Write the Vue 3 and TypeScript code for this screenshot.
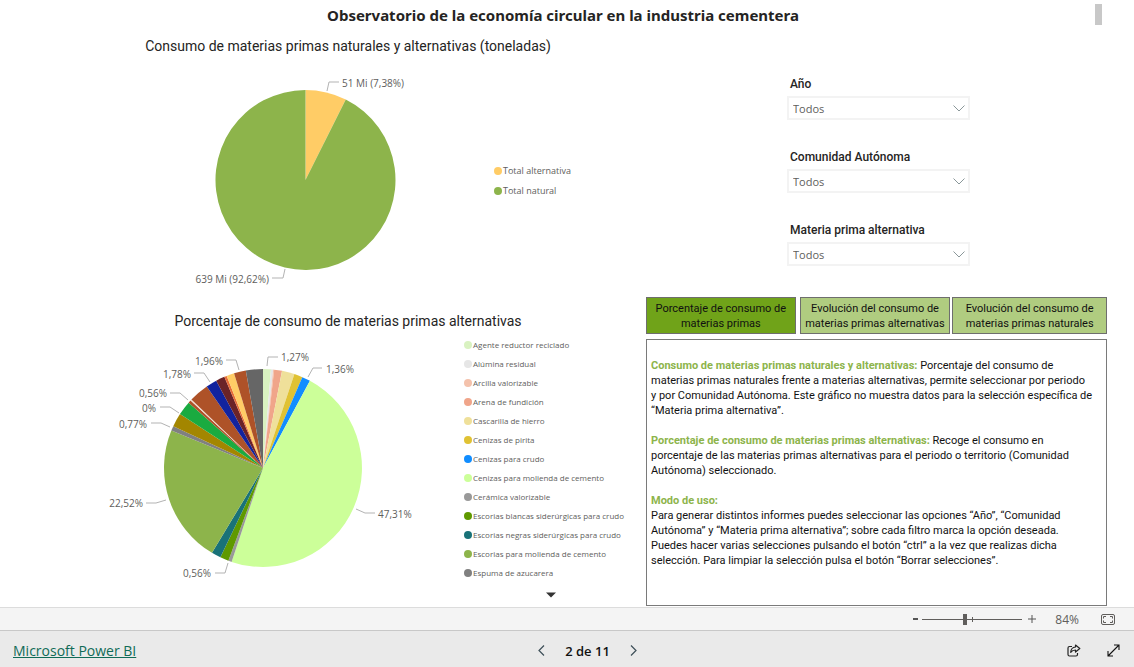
<script setup lang="ts">
import { ref } from 'vue'

interface Slice { name: string; end: number; color: string }
interface Callout { text: string; x: number; y: number; anchor: 'start' | 'end'; line: string }

const materials: Slice[] = [
  { name: 'Agente reductor reciclado', end: 4.6, color: '#d9f2c1' },
  { name: 'Alúmina residual', end: 5.9, color: '#e6e6e6' },
  { name: 'Arcilla valorizable', end: 6.5, color: '#f4c2ac' },
  { name: 'Arena de fundición', end: 11.1, color: '#f0a58a' },
  { name: 'Cascarilla de hierro', end: 18.5, color: '#efe09a' },
  { name: 'Cenizas de pirita', end: 23.4, color: '#e0c233' },
  { name: 'Cenizas para crudo', end: 28.3, color: '#118dff' },
  { name: 'Cenizas para molienda de cemento', end: 198.5, color: '#ccff99' },
  { name: 'Cerámica valorizable', end: 200.5, color: '#999999' },
  { name: 'Escorias blancas siderúrgicas para crudo', end: 205.5, color: '#5f9900' },
  { name: 'Escorias negras siderúrgicas para crudo', end: 211, color: '#197278' },
  { name: 'Escorias para molienda de cemento', end: 292.2, color: '#8db44b' },
  { name: 'Espuma de azucarera', end: 295, color: '#808080' },
]

const otherSlices: Slice[] = [
  { name: 'o1', end: 303, color: '#a38600' },
  { name: 'o2', end: 311.3, color: '#1aab40' },
  { name: 'o3', end: 313, color: '#ae5228' },
  { name: 'o4', end: 313.7, color: '#f3ddd2' },
  { name: 'o5', end: 325.4, color: '#ae5228' },
  { name: 'o6', end: 331.8, color: '#12239e' },
  { name: 'o7', end: 337, color: '#6b2328' },
  { name: 'o8', end: 338.5, color: '#e66c37' },
  { name: 'o9', end: 343, color: '#ffcc66' },
  { name: 'o10', end: 350, color: '#ae5228' },
  { name: 'o11', end: 360, color: '#666666' },
]

const totals: Slice[] = [
  { name: 'Total alternativa', end: 26.57, color: '#ffcc66' },
  { name: 'Total natural', end: 360, color: '#8db44b' },
]

function arcs(slices: Slice[], cx: number, cy: number, r: number) {
  const point = (deg: number) => {
    const a = (deg * Math.PI) / 180
    return `${(cx + r * Math.sin(a)).toFixed(2)} ${(cy - r * Math.cos(a)).toFixed(2)}`
  }
  return slices.map((s, i) => {
    const start = i ? slices[i - 1].end : 0
    const large = s.end - start > 180 ? 1 : 0
    return { color: s.color, d: `M${cx} ${cy}L${point(start)}A${r} ${r} 0 ${large} 1 ${point(s.end)}Z` }
  })
}

const totalArcs = arcs(totals, 165.5, 120, 90)
const materialArcs = arcs([...materials, ...otherSlices], 163, 133, 99)

const totalCallouts: Callout[] = [
  { text: '51 Mi (7,38%)', x: 202, y: 27, anchor: 'start', line: 'M187 31L189 22H199' },
  { text: '639 Mi (92,62%)', x: 129, y: 223, anchor: 'end', line: 'M145 209L143 218H132' },
]

const materialCallouts: Callout[] = [
  { text: '1,27%', x: 181, y: 26, anchor: 'start', line: 'M167 31L168 22H178' },
  { text: '1,36%', x: 226, y: 38, anchor: 'start', line: 'M208 42L213 33H222' },
  { text: '47,31%', x: 278, y: 183, anchor: 'start', line: 'M256 174L265 178H275' },
  { text: '0,56%', x: 111, y: 242, anchor: 'end', line: 'M128 228L125 238H115' },
  { text: '22,52%', x: 43, y: 172, anchor: 'end', line: 'M66 165L56 168H46' },
  { text: '0,77%', x: 47, y: 93, anchor: 'end', line: 'M70 92L61 88H51' },
  { text: '0%', x: 56, y: 77, anchor: 'end', line: 'M79 78L70 72H60' },
  { text: '0,56%', x: 67, y: 62, anchor: 'end', line: 'M88 65L80 58H70' },
  { text: '1,78%', x: 91, y: 43, anchor: 'end', line: 'M110 47L104 38H94' },
  { text: '1,96%', x: 123, y: 30, anchor: 'end', line: 'M139 35L136 25H126' },
]

const filters = [
  { id: 'year', label: 'Año' },
  { id: 'region', label: 'Comunidad Autónoma' },
  { id: 'material', label: 'Materia prima alternativa' },
]

const tabs = [
  ['Porcentaje de consumo de', 'materias primas'],
  ['Evolución del consumo de', 'materias primas alternativas'],
  ['Evolución del consumo de', 'materias primas naturales'],
]
const activeTab = ref(0)
const zoom = ref(84)
</script>

<template>
  <div class="app">
    <main class="report">
      <h1>Observatorio de la economía circular en la industria cementera</h1>
      <div class="columns">
        <div class="charts">
          <section class="chart totals">
            <h2>Consumo de materias primas naturales y alternativas (toneladas)</h2>
            <div class="chart-body">
              <svg class="pie" width="320" height="236" viewBox="0 0 320 236" role="img" aria-label="Consumo de materias primas">
                <path v-for="a in totalArcs" :key="a.d" :d="a.d" :fill="a.color" />
                <g v-for="c in totalCallouts" :key="c.line">
                  <path class="leader" :d="c.line" />
                  <text :x="c.x" :y="c.y" :text-anchor="c.anchor">{{ c.text }}</text>
                </g>
              </svg>
              <ul class="legend">
                <li v-for="s in totals" :key="s.name"><i :style="{ background: s.color }"></i>{{ s.name }}</li>
              </ul>
            </div>
          </section>
          <section class="chart materials">
            <h2>Porcentaje de consumo de materias primas alternativas</h2>
            <div class="chart-body">
              <svg class="pie" width="340" height="260" viewBox="0 0 340 260" role="img" aria-label="Porcentaje de materias primas alternativas">
                <path v-for="a in materialArcs" :key="a.d" :d="a.d" :fill="a.color" />
                <g v-for="c in materialCallouts" :key="c.line">
                  <path class="leader" :d="c.line" />
                  <text :x="c.x" :y="c.y" :text-anchor="c.anchor">{{ c.text }}</text>
                </g>
              </svg>
              <div class="legend-box">
                <ul class="legend">
                  <li v-for="s in materials" :key="s.name"><i :style="{ background: s.color }"></i>{{ s.name }}</li>
                </ul>
                <button class="more" type="button" aria-label="Más">
                  <svg width="10" height="6" viewBox="0 0 10 6"><path d="M0 .5H10L5 5.5Z" fill="#333" /></svg>
                </button>
              </div>
            </div>
          </section>
        </div>

        <div class="side">
          <form class="filters">
            <div v-for="f in filters" :key="f.id" class="filter">
              <label :for="f.id">{{ f.label }}</label>
              <div class="select">
                <select :id="f.id"><option>Todos</option></select>
                <svg width="12" height="7" viewBox="0 0 12 7"><path d="M.5 .5L6 6L11.500 .5" fill="none" stroke="#8a9799" /></svg>
              </div>
            </div>
          </form>
          <nav class="tabs">
            <button v-for="(t, i) in tabs" :key="i" type="button" :class="{ active: activeTab === i }" @click="activeTab = i">
              {{ t[0] }}<br />{{ t[1] }}
            </button>
          </nav>
          <article class="notes">
            <p><b>Consumo de materias primas naturales y alternativas:</b> Porcentaje del consumo de<br />materias primas naturales frente a materias alternativas, permite seleccionar por periodo<br />y por Comunidad Autónoma. Este gráfico no muestra datos para la selección específica de<br />“Materia prima alternativa”.</p>
            <p><b>Porcentaje de consumo de materias primas alternativas:</b> Recoge el consumo en<br />porcentaje de las materias primas alternativas para el periodo o territorio (Comunidad<br />Autónoma) seleccionado.</p>
            <p><b>Modo de uso:</b><br />Para generar distintos informes puedes seleccionar las opciones “Año”, “Comunidad<br />Autónoma” y “Materia prima alternativa”; sobre cada filtro marca la opción deseada.<br />Puedes hacer varias selecciones pulsando el botón “ctrl” a la vez que realizas dicha<br />selección. Para limpiar la selección pulsa el botón “Borrar selecciones”.</p>
          </article>
        </div>
      </div>
      <div class="scroll-thumb"></div>
    </main>

    <div class="zoom-bar">
      <button type="button" class="step" aria-label="Alejar">
        <svg width="5" height="10" viewBox="0 0 5 10"><path d="M0 5H5" stroke="#555" stroke-width="2" /></svg>
      </button>
      <div class="slider">
        <input v-model="zoom" type="range" min="0" max="200" aria-label="Zoom" />
        <span class="tick"></span>
      </div>
      <button type="button" class="step" aria-label="Acercar">
        <svg width="8" height="10" viewBox="0 0 8 10"><path d="M0 5H8M4 1V9" stroke="#555" /></svg>
      </button>
      <output>{{ zoom }}%</output>
      <button type="button" class="fit" aria-label="Ajustar a la página">
        <svg width="14" height="11" viewBox="0 0 14 11" fill="none" stroke="#5f5d5b">
          <rect x=".5" y=".5" width="13" height="10" rx="1.500" />
          <path d="M5 2.500H2.500V4.500M9 2.500H11.500V4.500M5 8.500H2.500V6.500M9 8.500H11.500V6.500" />
        </svg>
      </button>
    </div>

    <footer class="footer">
      <a href="#">Microsoft Power BI</a>
      <div class="pager">
        <button type="button" aria-label="Anterior">
          <svg width="7" height="11" viewBox="0 0 7 11"><path d="M6 .5L1 5.500L6 10.500" fill="none" stroke="#3d4f58" stroke-width="1.200" /></svg>
        </button>
        <span>2 de 11</span>
        <button type="button" aria-label="Siguiente">
          <svg width="7" height="11" viewBox="0 0 7 11"><path d="M1 .5L6 5.500L1 10.500" fill="none" stroke="#3d4f58" stroke-width="1.200" /></svg>
        </button>
      </div>
      <div class="actions">
        <button type="button" aria-label="Compartir">
          <svg width="14" height="13" viewBox="0 0 14 13" fill="none" stroke="#222" stroke-width="1.200">
            <path d="M5 2.500H2.500A1.500 1.500 0 0 0 1 4V10.500A1.500 1.500 0 0 0 2.500 12H9A1.500 1.500 0 0 0 10.500 10.500V9" />
            <path d="M8.500 1L12.800 4.500L8.500 8V6C6 6 5 6.500 3.700 8.300C3.900 5.200 5.500 3.200 8.500 3Z" stroke-linejoin="round" />
          </svg>
        </button>
        <button type="button" aria-label="Pantalla completa">
          <svg width="13" height="13" viewBox="0 0 13 13" fill="none" stroke="#111" stroke-width="1.100"><path d="M1 12L12 1M7 1H12V6M1 7V12H6" /></svg>
        </button>
      </div>
    </footer>
  </div>
</template>

<style>
body { margin: 0; }
</style>

<style scoped>
.app {
  display: flex;
  flex-direction: column;
  min-height: 100vh;
  background: #fff;
  color: #252423;
  font-family: "Open Sans", "Noto Sans", sans-serif;
}
button { padding: 0; border: 0; background: none; font: inherit; color: inherit; cursor: pointer; }
button svg { display: block; }
h1, h2, p, ul { margin: 0; padding: 0; font-weight: 400; }
.report { position: relative; flex: 1; display: flex; flex-direction: column; }
h1 {
  padding: 5px 8px 0 0;
  text-align: center;
  font: 700 15px/20px "Noto Sans", sans-serif;
}
.columns { flex: 1; display: grid; grid-template-columns: minmax(0, 646fr) minmax(0, 488fr); }
.chart h2 { margin-left: 50px; text-align: center; font: 14px/20px Roboto, sans-serif; }
.totals { padding-top: 11px; }
.materials { padding-top: 15px; }
.chart-body { display: flex; }
.pie { display: block; flex: none; }
.totals .pie { margin: 4px 34px 0 140px; }
.materials .pie { margin: 4px 24px 0 100px; }
.pie text { font: 10px "Open Sans", sans-serif; fill: #605e5c; }
.leader { fill: none; stroke: #b3b3b3; }
.legend { list-style: none; font: 8px/19px "Open Sans", sans-serif; color: #605e5c; }
.legend li { display: flex; align-items: center; gap: 1px; white-space: nowrap; }
.legend i { width: 8px; height: 8px; border-radius: 50%; }
.totals .legend { align-self: center; padding-top: 10px; font-size: 9px; line-height: 20px; }
.legend-box { display: flex; flex-direction: column; align-items: center; padding-top: 4px; }
.more { margin-top: 10px; padding-left: 14px; }

.side { display: flex; flex-direction: column; padding-right: 27px; }
.filters { display: grid; gap: 29px; width: 183px; margin: 51px 0 31px 141px; }
.filter { display: grid; gap: 4px; }
.filter label { padding-left: 3px; font: 500 12px/16px Roboto, sans-serif; }
.select { position: relative; }
.select select {
  display: block;
  width: 100%;
  height: 24px;
  padding: 0 4px;
  border: 2px solid #f3f3f3;
  border-radius: 0;
  appearance: none;
  background: #fff;
  color: #605e5c;
  font: 11px "Open Sans", sans-serif;
}
.select svg { position: absolute; right: 5px; top: 9px; pointer-events: none; }
.tabs { display: grid; grid-template-columns: 152fr 151fr 155fr; column-gap: 2px; }
.tabs button {
  height: 37px;
  border: 1px solid #6e6e6e;
  background: #b0cc80;
  color: #111;
  font: 11px/15px Roboto, sans-serif;
  white-space: nowrap;
}
.tabs button:first-child { margin-right: 2px; }
.tabs button.active { background: #70a319; }
.notes {
  flex: 1;
  display: grid;
  align-content: start;
  gap: 15px;
  margin: 5px 0 1px;
  padding: 18px 4px;
  border: 1px solid #7a7a7a;
  color: #111;
  font: 11px/15px Roboto, sans-serif;
  white-space: nowrap;
}
.notes b { color: #8db44b; }
.scroll-thumb { position: absolute; top: 4px; right: 32px; width: 7px; height: 21px; background: #c8c8c8; }

.zoom-bar {
  display: flex;
  align-items: center;
  justify-content: flex-end;
  height: 22px;
  padding-right: 19px;
  border-top: 1px solid #dcdcdc;
  background: #f4f4f4;
  color: #605e5c;
  font-size: 12px;
}
.slider { position: relative; display: flex; width: 100px; margin: 0 6px 0 4px; }
.slider input { width: 100%; height: 12px; margin: 0; appearance: none; background: linear-gradient(#605e5c, #605e5c) center / 100% 1px no-repeat; }
.slider input::-webkit-slider-thumb { appearance: none; width: 4px; height: 11px; background: #605e5c; }
.tick { position: absolute; left: 50px; top: 4px; width: 1px; height: 5px; background: #605e5c; }
.zoom-bar output { margin: 0 22px 0 19px; }

.footer {
  display: grid;
  grid-template-columns: 1fr auto 1fr;
  align-items: center;
  height: 37px;
  padding: 3px 14px 0 13px;
  border-top: 1px solid #c8c8c8;
  background: #eaeaea;
  box-sizing: border-box;
}
.footer a { color: #106b57; font: 14px/20px "Open Sans", sans-serif; }
.pager { display: flex; align-items: center; gap: 20px; margin-left: 42px; color: #111; font: 600 13px/20px "Open Sans", sans-serif; }
.actions { display: flex; justify-content: flex-end; align-items: center; gap: 26px; }
</style>
